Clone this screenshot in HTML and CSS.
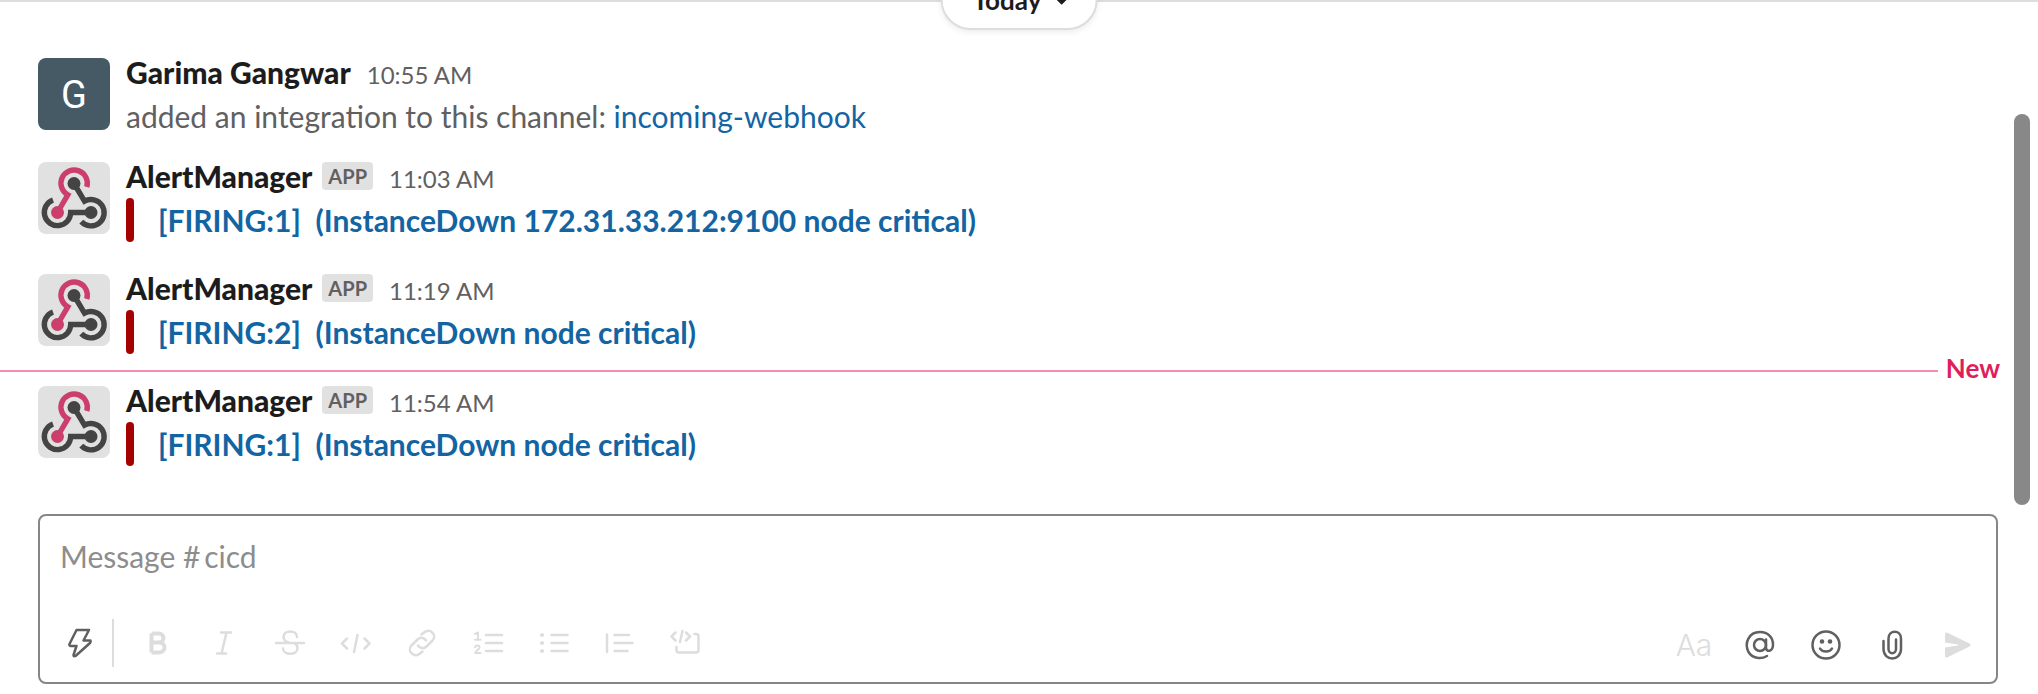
FILE: index.html
```html
<!DOCTYPE html>
<html lang="en">
<head>
<meta charset="utf-8">
<title>cicd</title>
<link rel="stylesheet" href="styles.css">
</head>
<body>
<svg class="sprite" aria-hidden="true">
  <symbol id="webhook" viewBox="0 0 72 72">
    <g fill="none" stroke-width="5.400">
      <path stroke="#444" d="M36 21.500L46.500 39.200A13.200 13.200 0 1 1 43.300 59.700M53 50.500H32.700A13.200 13.200 0 1 1 15 38"/>
      <path stroke="#cc3f6c" d="M19.500 50.500L29.800 32.800A13.200 13.200 0 1 1 48.800 25"/>
    </g>
    <circle cx="36" cy="21.500" r="6.500" fill="#444"/>
    <circle cx="53" cy="50.500" r="6.500" fill="#444"/>
    <circle cx="19.500" cy="50.500" r="6.500" fill="#cc3f6c"/>
  </symbol>
</svg>
<main class="feed">
  <button class="day" type="button">Today
    <svg class="day-chevron" viewBox="0 0 16 16"><path d="M3 5L8 10L13 5"/></svg>
  </button>
  <article class="message">
    <div class="avatar avatar-user">G</div>
    <div class="content">
      <header class="meta"><strong class="name">Garima Gangwar</strong><time class="time">10:55 AM</time></header>
      <p class="notice">added an integration to this channel: <a class="link" href="#">incoming-webhook</a></p>
    </div>
  </article>
  <article class="message">
    <svg class="avatar avatar-app" role="img" aria-label="AlertManager"><use href="#webhook"/></svg>
    <div class="content">
      <header class="meta"><strong class="name">AlertManager</strong><span class="badge">APP</span><time class="time">11:03 AM</time></header>
      <div class="attachment"><a class="link alert" href="#">[FIRING:1]&nbsp; (InstanceDown 172.31.33.212:9100 node critical)</a></div>
    </div>
  </article>
  <article class="message">
    <svg class="avatar avatar-app" role="img" aria-label="AlertManager"><use href="#webhook"/></svg>
    <div class="content">
      <header class="meta"><strong class="name">AlertManager</strong><span class="badge">APP</span><time class="time">11:19 AM</time></header>
      <div class="attachment"><a class="link alert" href="#">[FIRING:2]&nbsp; (InstanceDown node critical)</a></div>
    </div>
  </article>
  <div class="unread"><span class="unread-line"></span><span class="unread-label">New</span></div>
  <article class="message">
    <svg class="avatar avatar-app" role="img" aria-label="AlertManager"><use href="#webhook"/></svg>
    <div class="content">
      <header class="meta"><strong class="name">AlertManager</strong><span class="badge">APP</span><time class="time">11:54 AM</time></header>
      <div class="attachment"><a class="link alert" href="#">[FIRING:1]&nbsp; (InstanceDown node critical)</a></div>
    </div>
  </article>
  <div class="scrollbar"></div>
</main>
<form class="composer">
  <textarea class="input" rows="1" aria-label="Message #cicd" placeholder="Message #&#8201;cicd"></textarea>
  <div class="toolbar">
    <button class="tool active" type="button" aria-label="Shortcuts"><svg viewBox="0 0 36 36"><path d="M14.500 5H27L21.500 15.500H28.500Q29 17 28 18L13.500 31Q11.500 32 11.500 30L14.500 21H8.500Q7 20.500 7.500 19Z"/></svg></button>
    <span class="separator"></span>
    <button class="tool" type="button" aria-label="Bold"><svg viewBox="0 0 36 36"><path class="wide" d="M11.500 8.500V27.500M11.500 8.500H18.500C25 8.500 25 17.500 18.500 17.500H11.500M18.500 17.500C26.500 17.500 26.500 27.500 18.500 27.500H11.500"/></svg></button>
    <button class="tool" type="button" aria-label="Italic"><svg viewBox="0 0 36 36"><path d="M15 7.500H25M11 28.500H20M20.500 7.500L15.500 28.500"/></svg></button>
    <button class="tool" type="button" aria-label="Strikethrough"><svg viewBox="0 0 36 36"><path d="M4 18H32M25 12C25 4.500 11.500 4.500 11.500 12C11.500 15 14 17 18 18M11 23.500C11 30.500 25.500 30.500 25.500 23.500C25.500 21.500 24.500 19 22 18"/></svg></button>
    <button class="tool" type="button" aria-label="Code"><svg viewBox="0 0 36 36"><path d="M9 13.500L4 18.500L9 23.500M26.500 13.500L31.500 18.500L26.500 23.500M19.500 10L16 27"/></svg></button>
    <button class="tool" type="button" aria-label="Link"><svg viewBox="0 0 36 36"><path d="M17.500 9.500L20 7.500C26 2.500 33.500 10 28.500 15.500L22.500 21.500C19 24.500 15.500 23 14 20.500M18.500 26.500L16 28.500C10 33.500 2.500 26 7.500 20.500L13.500 14.500C17 11.500 20.500 13 22 15.500"/></svg></button>
    <button class="tool" type="button" aria-label="Ordered list"><svg viewBox="0 0 36 36"><path d="M16 10H32M16 18H32M16 26H32"/><path class="fine" d="M5 9L8 7.500V14.500M5 14.800H10.500M5 22C6 20 9.500 20 9.500 22.500C9.500 24.500 5.500 25.500 5.200 28H10.500"/></svg></button>
    <button class="tool" type="button" aria-label="Bulleted list"><svg viewBox="0 0 36 36"><path d="M15.500 10H31.500M15.500 18H31.500M15.500 26H31.500"/><path class="wide round" d="M6 10H6.100M6 18H6.100M6 26H6.100"/></svg></button>
    <button class="tool" type="button" aria-label="Quote"><svg viewBox="0 0 36 36"><path d="M5 9.500V27M12.500 10H27M12.500 18H30.500M12.500 26H25.500"/></svg></button>
    <button class="tool" type="button" aria-label="Code block"><svg viewBox="0 0 36 36"><path d="M7.500 7.500L3.500 11.500L7.500 15.500M18 7.500L22 11.500L18 15.500M14.500 6L12 17M26.500 9H28Q30.500 9 30.500 11.500V25Q30.500 27.500 28 27.500H11Q8.500 27.500 8.500 25V22"/></svg></button>
    <div class="actions">
      <button class="tool" type="button" aria-label="Formatting"><span class="aa">Aa</span></button>
      <button class="tool active" type="button" aria-label="Mention"><svg viewBox="0 0 36 36"><path d="M25 29C19 32.500 10.500 31.500 6.500 25C2 16.500 6.500 5 18 5C26 5 31 10.500 31 17.500C31 25 24 25.500 24 20.500V12.500"/><circle cx="18" cy="18" r="6"/></svg></button>
      <button class="tool active" type="button" aria-label="Emoji"><svg viewBox="0 0 36 36"><circle cx="18" cy="18" r="13.500"/><path d="M12 21.500C14 25.500 22 25.500 24 21.500"/><circle class="solid" cx="14" cy="14.500" r="2.300"/><circle class="solid" cx="22" cy="14.500" r="2.300"/></svg></button>
      <button class="tool active" type="button" aria-label="Attach file"><svg viewBox="0 0 36 36"><path d="M9.500 14V22C9.500 34.500 27 34.500 27 22V11.500C27 2.500 14.500 2.500 14.500 11.500V22C14.500 27.500 22 27.500 22 22V12.500"/></svg></button>
      <button class="tool" type="submit" aria-label="Send"><svg viewBox="0 0 36 36"><path class="solid" d="M5 6.500Q5.500 5 7.500 5.800L29.500 16.500Q32 18 29.500 19.500L7.500 30.200Q5.500 31 5 29.500V20.500L18 18.500Q19 18 18 17.500L5 15.500Z"/></svg></button>
    </div>
  </div>
</form>
</body>
</html>
```
FILE: styles.css
```css
* { box-sizing: border-box; }

body {
  margin: 0;
  height: 100vh;
  display: flex;
  flex-direction: column;
  overflow: hidden;
  background: #fff;
  color: #1d1c1d;
  font: 30px/44px Lato, sans-serif;
}

.sprite { display: none; }

.feed {
  position: relative;
  flex: 1;
  padding-top: 40px;
  border-top: 2px solid #ddd;
}

.day {
  position: absolute;
  top: -32px;
  left: 50%;
  transform: translateX(-50%);
  display: flex;
  align-items: center;
  gap: 12px;
  height: 60px;
  padding: 0 26px 0 30px;
  border: 2px solid #ddd;
  border-radius: 30px;
  background: #fff;
  box-shadow: 0 2px 6px rgba(0, 0, 0, .08);
  color: #1d1c1d;
  font: 700 26px/36px Lato, sans-serif;
}

.day-chevron {
  width: 16px;
  height: 16px;
  fill: none;
  stroke: currentColor;
  stroke-width: 4;
}

.message {
  display: flex;
  gap: 16px;
  padding: 8px 40px 8px 38px;
}

.avatar {
  flex: none;
  width: 72px;
  height: 72px;
  margin-top: 8px;
  border-radius: 8px;
}

.avatar-user {
  background: #455a64;
  color: #fff;
  font: 38px/74px Roboto, sans-serif;
  text-align: center;
}

.avatar-app { background: #e1e1e1; }

.content { flex: 1; }

.meta {
  display: flex;
  align-items: baseline;
}

.name { font-weight: 900; }

.badge {
  align-self: center;
  margin-left: 10px;
  padding: 0 6px;
  border-radius: 4px;
  background: #e1e1e1;
  color: #616061;
  font-size: 20px;
  font-weight: 700;
  line-height: 28px;
}

.time {
  margin-left: 16px;
  color: #616061;
  font-size: 24px;
  line-height: 28px;
}

.notice {
  margin: 0;
  color: #616061;
}

.link {
  color: #1264a3;
  text-decoration: none;
}

.attachment {
  display: flex;
  margin-bottom: 8px;
}

.attachment::before {
  content: "";
  width: 8px;
  margin-right: 24px;
  border-radius: 4px;
  background: #a30200;
}

.alert { font-weight: 700; }

.unread {
  display: flex;
  align-items: center;
  gap: 8px;
  height: 2px;
  margin-bottom: -2px;
  padding-right: 38px;
}

.unread-line {
  flex: 1;
  height: 2px;
  background: #f08fae;
}

.unread-label {
  padding-bottom: 6px;
  color: #e01e5a;
  font-size: 26px;
  font-weight: 700;
}

.scrollbar {
  position: absolute;
  top: 112px;
  right: 8px;
  bottom: 9px;
  width: 16px;
  border-radius: 8px;
  background: #888;
}

.composer {
  display: flex;
  flex-direction: column;
  gap: 35px;
  margin: 0 40px 10px 38px;
  padding: 18px 10px 9px 12px;
  border: 2px solid #868686;
  border-radius: 8px;
}

.input {
  height: 44px;
  padding: 0 8px;
  border: 0;
  outline: 0;
  resize: none;
  background: none;
  color: #1d1c1d;
  font: inherit;
}

.input::placeholder { color: #8d8d8d; }

.toolbar {
  display: flex;
  align-items: center;
  gap: 10px;
}

.tool {
  display: grid;
  place-items: center;
  width: 56px;
  height: 56px;
  padding: 0;
  border: 0;
  background: none;
  color: #ddd;
}

.tool.active { color: #616061; }

.tool svg {
  width: 36px;
  height: 36px;
  fill: none;
  stroke: currentColor;
  stroke-width: 2.5;
  stroke-linecap: round;
  stroke-linejoin: round;
}

.tool .wide { stroke-width: 4; stroke-linecap: butt; }
.tool .round { stroke-linecap: round; }
.tool .fine { stroke-width: 2; }
.tool .solid { fill: currentColor; stroke: none; }

.separator {
  width: 2px;
  height: 48px;
  margin: 0 6px 0 -6px;
  background: #ddd;
}

.actions {
  display: flex;
  gap: 10px;
  margin-left: auto;
  padding-top: 4px;
}

.aa { font: 300 30px/36px Inter, sans-serif; }
```
